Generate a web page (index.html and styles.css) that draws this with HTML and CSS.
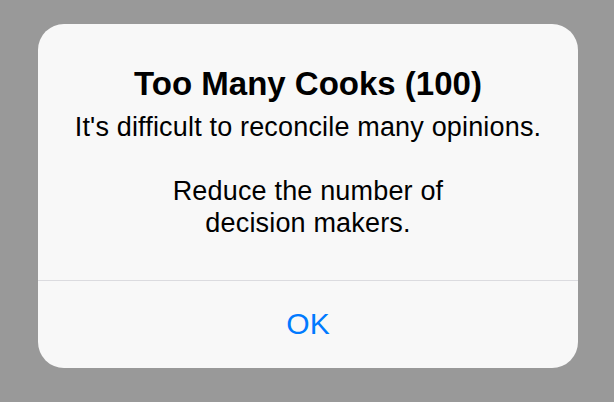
FILE: index.html
```html
<!DOCTYPE html>
<html lang="en">
<head>
  <meta charset="UTF-8">
  <meta name="viewport" content="width=device-width, initial-scale=1.0">
  <title>Too Many Cooks</title>
  <link rel="stylesheet" href="styles.css">
</head>
<body>

  <div class="alert">
    <div class="alert-content">
      <h1 class="alert-title">Too Many Cooks (100)</h1>
      <p class="alert-message">It's difficult to reconcile many opinions.<br><br>Reduce the number of<br>decision makers.</p>
    </div>
    <button class="alert-button">OK</button>
  </div>

</body>
</html>
```

FILE: styles.css
```css
body {
  font-family: "Liberation Sans", Arial, sans-serif;
  background-color: #999999;
  margin: 0;
  padding: 0;
  height: 402px;
}

.alert {
  width: 540px;
  height: 344px;
  margin: 24px 0 0 38px;
  background-color: #f8f8f8;
  border-radius: 26px;
  display: flex;
  flex-direction: column;
  overflow: hidden;
}

.alert-content {
  height: 256px;
  box-sizing: border-box;
  padding-top: 40px;
  text-align: center;
  color: #000;
}

.alert-title {
  margin: 0;
  font-size: 33px;
  line-height: 40px;
  font-weight: bold;
}

.alert-message {
  margin: 7px 0 0;
  font-size: 27px;
  line-height: 32px;
  letter-spacing: 0.17px;
}

.alert-button {
  flex: 1;
  border: none;
  border-top: 1px solid #dbdbdf;
  background: none;
  font-family: inherit;
  font-size: 30px;
  color: #007aff;
  padding: 0 0 2px;
  cursor: pointer;
}
```
